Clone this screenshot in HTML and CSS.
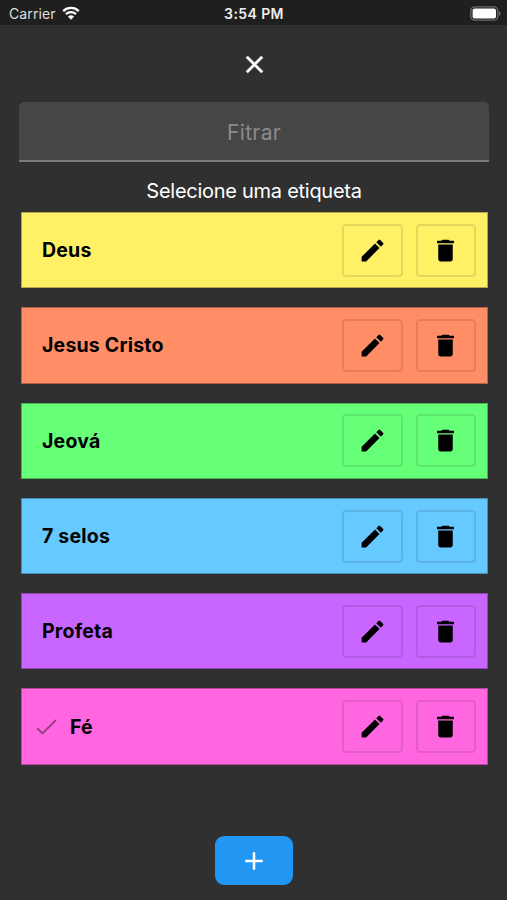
FILE: index.html
```html
<!DOCTYPE html>
<html lang="pt-BR">
<head>
    <meta charset="UTF-8">
    <title>Etiquetas</title>
    <link rel="stylesheet" href="styles.css">
</head>
<body>
    <!-- ícones -->
    <svg class="sprite">
        <symbol id="edit" viewBox="0 0 24 24"><path d="M3 17.25V21h3.75L17.81 9.94l-3.75-3.75L3 17.25zM20.71 7.04a1 1 0 0 0 0-1.41l-2.34-2.34a1 1 0 0 0-1.41 0l-1.83 1.83 3.75 3.75 1.83-1.83z"/></symbol>
        <symbol id="delete" viewBox="0 0 24 24"><path d="M6 19c0 1.1.9 2 2 2h8c1.1 0 2-.9 2-2V7H6v12zM19 4h-3.5l-1-1h-5l-1 1H5v2h14V4z"/></symbol>
    </svg>

    <div class="status-bar">
        <div class="carrier">
            <span>Carrier</span>
            <svg class="wifi" viewBox="0 0 18 14">
                <path d="M1.2 5.1a11.2 11.2 0 0 1 15.6 0M4 8.2a7.2 7.2 0 0 1 10 0"/>
                <path class="dot" d="M9 13.8L5.9 10.6a4.5 4.5 0 0 1 6.2 0z"/>
            </svg>
        </div>
        <div class="clock">3:54 PM</div>
        <div class="battery">
            <svg viewBox="0 0 31 15">
                <rect class="shell" x=".8" y=".8" width="27" height="13.4" rx="4"/>
                <rect class="level" x="2.6" y="2.6" width="23.4" height="9.8" rx="2"/>
                <path class="tip" d="M29 5.2c2.2.9 2.2 3.7 0 4.6z"/>
            </svg>
        </div>
    </div>

    <main class="content">
        <button class="close">
            <svg viewBox="0 0 24 24"><path d="M19 6.41L17.59 5 12 10.59 6.41 5 5 6.41 10.59 12 5 17.59 6.41 19 12 13.41 17.59 19 19 17.59 13.41 12z"/></svg>
        </button>

        <input class="filter" type="text" placeholder="Fitrar">
        <p class="hint">Selecione uma etiqueta</p>

        <div class="tags">
            <div class="tag yellow">
                <span class="name">Deus</span>
                <button class="action"><svg><use href="#edit"/></svg></button>
                <button class="action"><svg><use href="#delete"/></svg></button>
            </div>
            <div class="tag orange">
                <span class="name">Jesus Cristo</span>
                <button class="action"><svg><use href="#edit"/></svg></button>
                <button class="action"><svg><use href="#delete"/></svg></button>
            </div>
            <div class="tag green">
                <span class="name">Jeová</span>
                <button class="action"><svg><use href="#edit"/></svg></button>
                <button class="action"><svg><use href="#delete"/></svg></button>
            </div>
            <div class="tag blue">
                <span class="name">7 selos</span>
                <button class="action"><svg><use href="#edit"/></svg></button>
                <button class="action"><svg><use href="#delete"/></svg></button>
            </div>
            <div class="tag purple">
                <span class="name">Profeta</span>
                <button class="action"><svg><use href="#edit"/></svg></button>
                <button class="action"><svg><use href="#delete"/></svg></button>
            </div>
            <div class="tag pink selected">
                <svg class="check" viewBox="0 0 21 16"><path d="M1 9l5.4 5.4L20 1"/></svg>
                <span class="name">Fé</span>
                <button class="action"><svg><use href="#edit"/></svg></button>
                <button class="action"><svg><use href="#delete"/></svg></button>
            </div>
        </div>

        <button class="add">
            <svg viewBox="0 0 24 24"><path d="M19 13h-6v6h-2v-6H5v-2h6V5h2v6h6v2z"/></svg>
        </button>
    </main>
</body>
</html>
```
FILE: styles.css
```css
* {
    margin: 0;
    padding: 0;
    box-sizing: border-box;
}

body {
    height: 900px;
    background: #303030;
    color: #fff;
    font-family: Inter, Roboto, sans-serif;
    overflow: hidden;
}

button {
    border: none;
    background: none;
    display: flex;
    align-items: center;
    justify-content: center;
}

.sprite {
    display: none;
}

/* barra de status */
.status-bar {
    height: 25px;
    padding: 2px 6px 0 9px;
    background: #1f1f1f;
    display: grid;
    grid-template-columns: 1fr auto 1fr;
    align-items: center;
    font-size: 14px;
}

.carrier {
    display: flex;
    align-items: center;
    gap: 6px;
    color: #dedede;
    letter-spacing: 0.1px;
}

.wifi {
    width: 18px;
    height: 14px;
    fill: none;
    stroke: #fff;
    stroke-width: 2.3;
    margin-top: -2px;
}

.wifi .dot {
    fill: #fff;
    stroke: none;
}

.clock {
    font-weight: 600;
    color: #eee;
    letter-spacing: 0.4px;
    margin-right: 2px;
}

.battery {
    justify-self: end;
    height: 15px;
    margin-top: -1px;
}

.battery svg {
    display: block;
    width: 31px;
    height: 15px;
}

.shell {
    fill: none;
    stroke: #6c6c6c;
    stroke-width: 1.3;
}

.level {
    fill: #fff;
}

.tip {
    fill: #6c6c6c;
}

.content {
    height: 875px;
    padding: 25px 18px 15px 19px;
    display: flex;
    flex-direction: column;
    align-items: center;
}

.close svg {
    display: block;
    width: 29px;
    height: 29px;
    fill: #fff;
    stroke: #fff;
    stroke-width: 0.4;
}

/* campo de filtro */
.filter {
    width: 470px;
    height: 60px;
    flex-shrink: 0;
    margin-top: 23px;
    padding-top: 2px;
    background: #464646;
    border: none;
    border-bottom: 2px solid #7d7d7d;
    border-radius: 5px 5px 0 0;
    color: #fff;
    font-family: inherit;
    font-size: 21px;
    text-align: center;
    letter-spacing: 0.35px;
}

.filter::placeholder {
    color: #8b8b8b;
}

.hint {
    margin-top: 16px;
    height: 34px;
    font-size: 20px;
    line-height: 26px;
    letter-spacing: -0.27px;
}

/* lista de etiquetas */
.tags {
    width: 467px;
    display: flex;
    flex-direction: column;
    gap: 19px;
}

.tag {
    height: 76.3px;
    padding: 0 10.5px 0 20.5px;
    border: 1px solid rgba(0, 0, 0, 0.3);
    display: flex;
    align-items: center;
    gap: 13px;
}

.tag.selected {
    padding-left: 14.5px;
}

.yellow { background: #fff066; }
.orange { background: #ff8e66; }
.green { background: #66ff78; }
.blue { background: #66c9ff; }
.purple { background: #c966ff; }
.pink { background: #ff66e0; }

.name {
    flex: 1;
    color: #000;
    font-size: 19.5px;
    font-weight: 650;
    letter-spacing: 0.2px;
}

.check {
    width: 21px;
    height: 16px;
    fill: none;
    stroke: rgba(0, 0, 0, 0.4);
    stroke-width: 2;
}

.action {
    width: 60.5px;
    height: 53px;
    border: 2px solid rgba(0, 0, 0, 0.1);
    border-radius: 4px;
}

.action svg {
    width: 29px;
    height: 29px;
    fill: #000;
}

.add {
    width: 78px;
    height: 49px;
    margin-top: auto;
    background: #2196f3;
    border-radius: 9px;
}

.add svg {
    width: 30px;
    height: 30px;
    fill: #fff;
}
```
